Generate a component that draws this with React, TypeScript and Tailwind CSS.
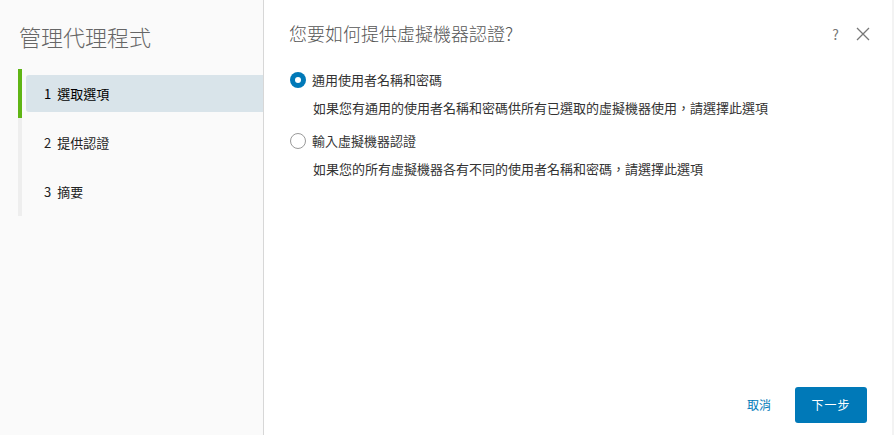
import React, { useState } from 'react';

const FONT = { fontFamily: '"Noto Sans CJK TC", "Noto Sans", sans-serif' };

const steps = [
  { n: '1', label: '選取選項' },
  { n: '2', label: '提供認證' },
  { n: '3', label: '摘要' },
];

const options = [
  { id: 'common', label: '通用使用者名稱和密碼', desc: '如果您有通用的使用者名稱和密碼供所有已選取的虛擬機器使用，請選擇此選項' },
  { id: 'each', label: '輸入虛擬機器認證', desc: '如果您的所有虛擬機器各有不同的使用者名稱和密碼，請選擇此選項' },
];

export default function App() {
  const [selected, setSelected] = useState('common');
  const [active] = useState(0);

  return (
    <div style={FONT} className="flex w-[894px] h-[435px] bg-white overflow-hidden">
      <div className="w-[264px] shrink-0 bg-[#fafafa] border-r border-[#d7d7d7] flex flex-col">
        <h1 className="pl-[19px] pt-[21px] text-[22px] leading-[30px] font-light text-[#666]">管理代理程式</h1>
        <div className="ml-[18px] mt-[18px] flex">
          <div className="w-[4px] bg-[#eeeeee] flex flex-col">
            <div className="h-[49px] bg-[#60b515]" />
          </div>
          <div className="flex-1 pt-[6px] pb-[6px] pl-[4px]">
            {steps.map((s, i) => (
              <div key={s.n} className={`h-[37px] mb-[12px] last:mb-0 flex items-center gap-[6px] pl-[18px] text-[13px] rounded-l-[3px] ${i === active ? 'bg-[#d9e4ea] text-[#000]' : 'text-[#222]'}`}>
                <span>{s.n}</span>
                <span>{s.label}</span>
              </div>
            ))}
          </div>
        </div>
      </div>

      <div className="flex-1 flex flex-col">
        <div className="flex items-start pl-[25px] pr-[22px] pt-[20px]">
          <h2 className="flex-1 text-[18px] leading-[26px] font-light text-[#565656]">您要如何提供虛擬機器認證?</h2>
          <div className="flex items-center gap-[17px] pt-[4px] text-[#777]">
            <span className="text-[14px] leading-[20px]">?</span>
            <svg width="14" height="14" viewBox="0 0 14 14" className="stroke-[#777]">
              <path d="M1 1L13 13M13 1L1 13" strokeWidth="1.3" />
            </svg>
          </div>
        </div>

        <div className="pl-[26px] pt-[25px] flex flex-col gap-[14px]">
          {options.map(o => (
            <div key={o.id}>
              <label className="flex items-center gap-[6px] h-[18px] cursor-pointer" onClick={() => setSelected(o.id)}>
                {selected === o.id ? (
                  <span className="w-[16px] h-[16px] rounded-full bg-[#0079b8] flex items-center justify-center">
                    <span className="w-[6px] h-[6px] rounded-full bg-white" />
                  </span>
                ) : (
                  <span className="w-[16px] h-[16px] rounded-full border border-[#9a9a9a] bg-white" />
                )}
                <span className="text-[13px] leading-[18px] text-[#333]">{o.label}</span>
              </label>
              <p className="pl-[23px] mt-[9px] text-[13px] leading-[20px] text-[#333]">{o.desc}</p>
            </div>
          ))}
        </div>

        <div className="mt-auto flex items-center justify-end pr-[25px] pb-[12px] gap-[24px]">
          <button className="text-[12px] text-[#0079b8]">取消</button>
          <button className="w-[72px] h-[36px] rounded-[3px] bg-[#0079b8] text-white text-[12px] tracking-[1px]">下一步</button>
        </div>
      </div>
      <div className="w-[2px] bg-[#f3f3f3]" />
    </div>
  );
}
